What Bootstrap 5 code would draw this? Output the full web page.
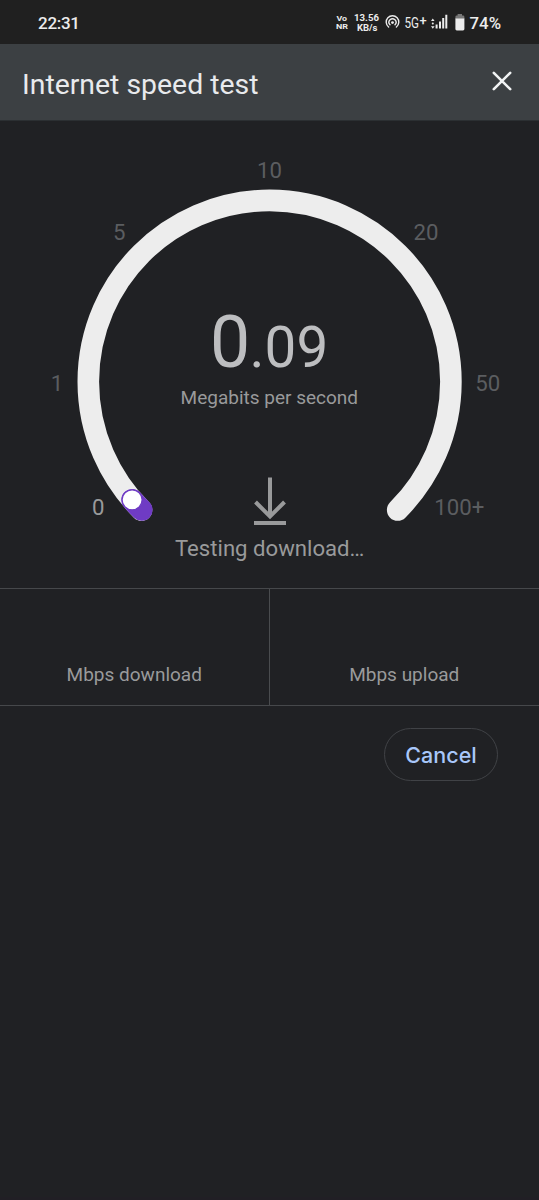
<!DOCTYPE html>
<html lang="en" data-bs-theme="dark">
<head>
<meta charset="utf-8">
<meta name="viewport" content="width=device-width, initial-scale=1">
<title>Internet speed test</title>
<link href="https://cdn.jsdelivr.net/npm/bootstrap@5.3.0/dist/css/bootstrap.min.css" rel="stylesheet">
<style>
  body { background: #202124; font-family: Roboto, "Liberation Sans", sans-serif; }
  .screen { height: 1200px; border-bottom: 3px solid #211f25; }
  .status-bar { height: 44px; background: #202020; }
  .app-header { height: 77px; background: #3c4043; border-bottom: 1px solid #2b2f32; padding: 5px 22px 0; }
  .app-title { font-size: 28.4px; line-height: 34px; color: #e8eaed; font-weight: 400; }
  .close-btn { width: 32px; height: 32px; margin: -7px -1px 0 0; }
  .gauge { height: 467px; }
  .results { height: 118px; border-top: 1px solid #46484b; border-bottom: 1px solid #46484b; }
  .result-cell { font-size: 19px; line-height: 24px; color: #999a9b; padding-bottom: 18px; }
  .result-cell:first-child { border-right: 1px solid #4a4c4f; }
  .actions { padding: 22px 41px 0; }
  .btn-cancel { width: 114px; height: 53px; border: 1px solid #404246; color: #a8c7fa; padding: 2px 0 0;
    font: 500 21.5px/1 Inter, Roboto, sans-serif; }
</style>
</head>
<body>
<main class="screen d-flex flex-column overflow-hidden">
  <div class="status-bar flex-shrink-0">
    <svg class="d-block" width="539" height="44" viewBox="0 0 539 44" fill="#ececec" font-family="Roboto, sans-serif" font-weight="500">
      <text x="38" y="28.8" font-size="17" textLength="42">22:31</text>
      <g font-weight="700">
        <text x="336.5" y="20.8" font-size="8" textLength="10.5" lengthAdjust="spacingAndGlyphs">Vo</text>
        <text x="336" y="28.5" font-size="8" textLength="12" lengthAdjust="spacingAndGlyphs">NR</text>
        <text x="354" y="20.6" font-size="9.6" textLength="25">13.56</text>
        <text x="357" y="30.7" font-size="9.6" textLength="20.5" lengthAdjust="spacingAndGlyphs">KB/s</text>
      </g>
      <g fill="none" stroke="#ececec" stroke-width="1.4" stroke-linecap="round">
        <path d="M388.6 27A6.3 6.3 0 1 1 396.4 27"/>
        <path d="M390 24.8A3.5 3.5 0 1 1 395 24.8"/>
      </g>
      <circle cx="392.5" cy="22.6" r="1.4"/>
      <text x="404.5" y="27.7" font-size="15.5" font-weight="400" textLength="14.5" lengthAdjust="spacingAndGlyphs">5G</text>
      <text x="419.4" y="24.6" font-size="13" textLength="7.2" lengthAdjust="spacingAndGlyphs">+</text>
      <path d="M431 21l1.8-2.5 1.8 2.5zM431 26.2l1.8 2.5 1.8-2.5z"/>
      <circle cx="432.8" cy="23.6" r="1"/>
      <path d="M435.6 24.6h2v4h-2zM439 21.5h2v7.1h-2zM442.2 17.9h2v10.7h-2zM445.3 14.8h2v13.8h-2z"/>
      <path d="M457.6 14h4.4v1.5h1a1.4 1.4 0 0 1 1.4 1.4v2.2h-9v-2.2a1.4 1.4 0 0 1 1.4-1.4h.8z" fill="#777"/>
      <path d="M455.4 18.5h9V29a1.4 1.4 0 0 1-1.4 1.4h-6.2a1.4 1.4 0 0 1-1.4-1.4z"/>
      <text x="469.5" y="28.8" font-size="16.8" textLength="31.5">74%</text>
    </svg>
  </div>

  <header class="app-header d-flex align-items-center justify-content-between flex-shrink-0">
    <h1 class="app-title m-0">Internet speed test</h1>
    <button class="close-btn btn p-0 border-0 d-flex" type="button" aria-label="Close">
      <svg width="32" height="32" viewBox="0 0 32 32" stroke="#f1f3f4" stroke-width="2.6" stroke-linecap="round"><path d="M7.8 7.8l16.4 16.4M24.2 7.8L7.8 24.2"/></svg>
    </button>
  </header>

  <section class="gauge flex-shrink-0">
    <svg class="d-block" width="539" height="467" viewBox="0 121 539 467" font-family="Roboto, sans-serif">
      <path d="M141.5 510A181.3 181.3 0 1 1 397.7 510" fill="none" stroke="#ededed" stroke-width="21.6" stroke-linecap="round"/>
      <path d="M132.2 499.8Q136.6 505 141.7 509.9" fill="none" stroke="#6f3bc4" stroke-width="21.8" stroke-linecap="round"/>
      <circle cx="132.1" cy="499.8" r="10" fill="#fff" stroke="#6f3bc4" stroke-width="1.2"/>
      <g font-size="22.2" fill="#5b5d60" text-anchor="middle">
        <text x="98.2" y="514.7" fill="#999a9b">0</text>
        <text x="57" y="391">1</text>
        <text x="119.2" y="240.2">5</text>
        <text x="269.6" y="178.3">10</text>
        <text x="426" y="240.2">20</text>
        <text x="487.8" y="391">50</text>
        <text x="459.3" y="514.7">100+</text>
      </g>
      <g fill="#bdbec0">
        <text x="210" y="366.6" font-size="71.5">0</text>
        <text x="249.5" y="366.6" font-size="57">.</text>
        <text x="264.6" y="366.6" font-size="56.6">09</text>
      </g>
      <g fill="#999a9b" text-anchor="middle">
        <text x="269.3" y="404.2" font-size="19" textLength="177.5" lengthAdjust="spacingAndGlyphs">Megabits per second</text>
        <text x="269.7" y="555.6" font-size="22.2" textLength="189.5" lengthAdjust="spacingAndGlyphs">Testing download…</text>
      </g>
      <path d="M270 477.5v39M255.5 502l14.5 14.5 14.5-14.5M254 523h32" fill="none" stroke="#999a9b" stroke-width="4"/>
    </svg>
  </section>

  <section class="results row g-0 flex-shrink-0">
    <div class="result-cell col-6 d-flex align-items-end justify-content-center">Mbps download</div>
    <div class="result-cell col-6 d-flex align-items-end justify-content-center">Mbps upload</div>
  </section>

  <div class="actions d-flex justify-content-end">
    <button class="btn-cancel btn rounded-pill" type="button">Cancel</button>
  </div>
</main>
<script src="https://cdn.jsdelivr.net/npm/bootstrap@5.3.0/dist/js/bootstrap.bundle.min.js"></script>
</body>
</html>
